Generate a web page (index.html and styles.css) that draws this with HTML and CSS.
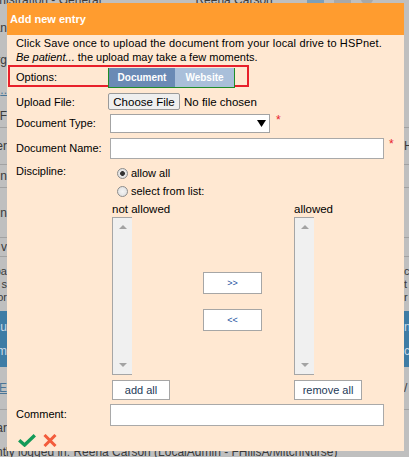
FILE: index.html
```html
<!DOCTYPE html>
<html lang="en">
<head>
  <meta charset="UTF-8">
  <meta name="viewport" content="width=device-width, initial-scale=1.0">
  <title>Add new entry</title>
  <link rel="stylesheet" href="styles.css">
</head>
<body>
  <div class="page">
    <div class="page-top">
      <span class="crumb">Administration - General</span>
      <span class="user">Reena Carson</span>
      <span class="tool tool-blue"></span>
      <span class="tool"></span>
      <span class="tool tool-round"></span>
    </div>
    <div class="bg-row" style="height: 32px"><span class="bg-left">an</span></div>
    <div class="bg-row" style="height: 31px"><span class="bg-left">rg</span></div>
    <div class="bg-row" style="height: 30px"><span class="bg-left bg-link">..</span></div>
    <div class="bg-row bg-line" style="height: 23px"><span class="bg-left">t F</span></div>
    <div class="bg-row bg-line" style="height: 37px"><span class="bg-left">er</span><span class="bg-right">H</span></div>
    <div class="bg-row bg-line" style="height: 23px"><span class="bg-left">n</span></div>
    <div class="bg-row bg-line" style="height: 50px"><span class="bg-left">un</span></div>
    <div class="bg-row bg-line" style="height: 19px"><span class="bg-left">v</span></div>
    <div class="bg-row bg-multi" style="height: 54px">
      <span class="bg-left"><span>pa</span><span>s</span><span>or</span></span>
      <span class="bg-right"><span>c</span><span>t</span><span>r</span></span>
    </div>
    <div class="bg-row bg-band" style="height: 56px">
      <span class="bg-left"><span>cu</span><span>m</span></span>
      <span class="bg-right"><span>n</span><span>c</span></span>
    </div>
    <div class="bg-row bg-line" style="height: 43px"><span class="bg-left bg-link">E</span><span class="bg-right">/</span></div>
    <div class="bg-row" style="height: 36px"><span class="bg-left">ar</span></div>
    <div class="page-foot">Currently logged in: Reena Carson (LocalAdmin - FHillsA/MitchNurse)</div>
  </div>

  <div class="dialog">
    <div class="dialog-header">Add new entry</div>
    <div class="dialog-body">
      <p class="intro"><span class="intro-first">Click Save once to upload the document from your local drive to HSPnet.</span><br><em>Be patient...</em> the upload may take a few moments.</p>

      <div class="options">
        <span class="field-label">Options:</span>
        <div class="tabs">
          <span class="tab tab-active">Document</span>
          <span class="tab">Website</span>
        </div>
      </div>

      <div class="field field-upload">
        <label class="field-label" for="upload">Upload File:</label>
        <input type="file" id="upload" class="file-input">
      </div>

      <div class="field field-type">
        <label class="field-label" for="doctype">Document Type:</label>
        <div class="select-wrap">
          <select id="doctype" class="select"><option></option></select>
          <svg class="select-arrow" width="9" height="7" viewBox="0 0 9 7"><polygon points="0,0 9,0 4.5,7" fill="#000"/></svg>
        </div>
        <span class="required">*</span>
      </div>

      <div class="field field-name">
        <label class="field-label" for="docname">Document Name:</label>
        <input type="text" id="docname" class="text-input">
        <span class="required">*</span>
      </div>

      <div class="field field-discipline">
        <span class="field-label">Discipline:</span>
        <div class="radios">
          <label class="radio-row"><input type="radio" name="discipline" class="radio" checked> allow all</label>
          <label class="radio-row"><input type="radio" name="discipline" class="radio"> select from list:</label>
        </div>
      </div>

      <div class="transfer">
        <div class="transfer-col">
          <div class="list-title">not allowed</div>
          <div class="listbox"><div class="scroll"><span class="arrow-up"></span><span class="arrow-down"></span></div></div>
          <button class="list-btn btn-add">add all</button>
        </div>
        <div class="transfer-mid">
          <button class="move-btn">&gt;&gt;</button>
          <button class="move-btn">&lt;&lt;</button>
        </div>
        <div class="transfer-col">
          <div class="list-title">allowed</div>
          <div class="listbox"><div class="scroll"><span class="arrow-up"></span><span class="arrow-down"></span></div></div>
          <button class="list-btn btn-remove">remove all</button>
        </div>
      </div>

      <div class="field field-comment">
        <label class="field-label" for="comment">Comment:</label>
        <input type="text" id="comment" class="text-input">
      </div>

      <div class="actions">
        <svg class="icon-save" width="18" height="13" viewBox="0 0 18 13"><path d="M1.2 6.2 L6.6 11 L16.8 1.3" fill="none" stroke="#149a58" stroke-width="3.4"/></svg>
        <svg class="icon-cancel" width="14" height="13" viewBox="0 0 14 13"><path d="M1.5 1 L12.5 12 M12.5 1 L1.5 12" fill="none" stroke="#f35c3c" stroke-width="3"/></svg>
      </div>
    </div>
  </div>
</body>
</html>
```

FILE: styles.css
```css
body {
  margin: 0;
  height: 457px;
  overflow: hidden;
  background-color: #bfbfbf;
  font-family: "Liberation Sans", Arial, sans-serif;
  font-size: 11px;
  color: #000;
}

/* page behind the dialog */
.page {
  color: #3a3a3a;
}
.page-top {
  display: flex;
  align-items: flex-start;
  height: 12px;
  line-height: 10px;
  font-size: 12px;
}
.crumb {
  margin-top: -5px;
  margin-left: -28px;
}
.user {
  margin-top: -5px;
  margin-left: 94px;
}
.tool {
  width: 17px;
  height: 10px;
  margin-top: -6px;
  margin-left: 10px;
  background-color: #a8a8a8;
}
.tool-blue {
  margin-left: 34px;
  background-color: #7d9fb8;
}
.tool-round {
  width: 12px;
  border-radius: 6px;
}
.bg-row {
  display: flex;
  align-items: center;
  box-sizing: border-box;
  font-size: 12px;
  line-height: 12px;
}
.bg-line {
  border-bottom: 1px solid #a2a2a2;
}
.bg-left {
  display: flex;
  justify-content: flex-end;
  width: 7px;
  white-space: nowrap;
}
.bg-right {
  margin-left: auto;
  width: 5px;
  white-space: nowrap;
}
.bg-multi .bg-left,
.bg-band .bg-left {
  flex-direction: column;
  align-items: flex-end;
}
.bg-multi .bg-right,
.bg-band .bg-right {
  display: flex;
  flex-direction: column;
}
.bg-multi {
  font-size: 11px;
  line-height: 13px;
}
.bg-link {
  color: #4a7596;
  text-decoration: underline;
}
.bg-band {
  background-color: #3e7ca5;
  color: #c9d9e6;
  line-height: 24px;
}
.page-foot {
  margin-left: -34px;
  margin-top: -1px;
  font-size: 12px;
  white-space: nowrap;
}

/* dialog */
.dialog {
  position: absolute;
  left: 7px;
  top: 3px;
  width: 397px;
  height: 448px;
  background-color: #ffe8d2;
}
.dialog-header {
  display: flex;
  align-items: center;
  height: 32px;
  padding-left: 3px;
  background-color: #ff9c2f;
  color: white;
  font-weight: bold;
  font-size: 11px;
}
.dialog-body {
  padding: 1px 9px 0 9px;
}
.intro {
  margin: 0;
  line-height: 14px;
}
.intro-first {
  letter-spacing: 0.15px;
}
.options {
  display: flex;
  align-items: center;
  box-sizing: border-box;
  width: 241px;
  height: 22px;
  margin: 1px 0 0 -8px;
  padding: 1px 0 0 6px;
  border: 2px solid #e8202b;
}
.options .field-label {
  width: 92px;
  align-self: center;
}
.tabs {
  display: flex;
  align-self: flex-start;
  height: 20px;
  margin-bottom: -3px;
  border: 1px solid #1f8d27;
  border-top: none;
  box-sizing: border-box;
}
.tab {
  display: flex;
  align-items: center;
  justify-content: center;
  width: 59px;
  background-color: #a9bfda;
  color: white;
  font-weight: bold;
  font-size: 10px;
}
.tab-active {
  width: 66px;
  background-color: #6a8ab5;
}
.field {
  display: flex;
  align-items: center;
}
.field-label {
  width: 94px;
  flex-shrink: 0;
}
.field-upload {
  margin-top: 6px;
  height: 17px;
}
.field-upload .field-label {
  width: 92px;
}
.file-input {
  font-family: inherit;
  font-size: 11.5px;
  color: #000;
}
.file-input::file-selector-button {
  height: 17px;
  width: 72px;
  margin-right: 4px;
  padding: 0;
  font-family: inherit;
  font-size: 11.5px;
  background-color: #efefef;
  border: 1px solid #9a9a9a;
  border-radius: 2px;
  color: #000;
}
.field-type {
  margin-top: 4px;
  align-items: flex-start;
}
.field-type .field-label {
  line-height: 19px;
}
.select-wrap {
  position: relative;
}
.select {
  display: block;
  appearance: none;
  width: 160px;
  height: 19px;
  margin: 0;
  border: 1px solid #a3a3a3;
  border-radius: 0;
  background-color: white;
}
.select-arrow {
  position: absolute;
  right: 4px;
  top: 6px;
}
.required {
  margin-left: 6px;
  color: #e8202b;
  font-size: 12px;
  line-height: 12px;
}
.field-name {
  margin-top: 5px;
  align-items: flex-start;
}
.field-name .field-label,
.field-comment .field-label {
  line-height: 21px;
}
.text-input {
  box-sizing: border-box;
  width: 274px;
  height: 21px;
  margin: 0;
  border: 1px solid #a9a9a9;
  background-color: white;
}
.field-name .required {
  margin-left: 5px;
}
.field-discipline {
  margin-top: 5px;
  align-items: flex-start;
}
.field-discipline .field-label {
  line-height: 14px;
}
.radios {
  display: flex;
  flex-direction: column;
  margin-left: 7px;
}
.radio-row {
  display: flex;
  align-items: center;
  height: 18px;
  gap: 3px;
  font-size: 11px;
}
.radio {
  appearance: none;
  width: 11px;
  height: 11px;
  margin: 0;
  border: 1px solid #8c8c8c;
  border-radius: 50%;
  background: radial-gradient(circle, #f4f4f4 0, #dcdcdc 100%);
}
.radio:checked {
  background: radial-gradient(circle, #333 0, #333 2px, #e6e6e6 2.8px, #dcdcdc 100%);
}
.transfer {
  display: flex;
  margin: 2px 0 0 96px;
}
.transfer-col {
  display: flex;
  flex-direction: column;
  align-items: flex-start;
  width: 91px;
}
.list-title {
  height: 14px;
  line-height: 14px;
  font-size: 11.5px;
}
.listbox {
  box-sizing: border-box;
  width: 20px;
  height: 158px;
  margin-top: 1px;
  border: 1px solid #a6a6a6;
  border-right: none;
  background-color: white;
}
.scroll {
  display: flex;
  flex-direction: column;
  justify-content: space-between;
  align-items: center;
  height: 100%;
  padding: 7px 0;
  box-sizing: border-box;
  background-color: #f0f0f0;
}
.arrow-up,
.arrow-down {
  width: 0;
  height: 0;
  border-left: 4px solid transparent;
  border-right: 4px solid transparent;
}
.arrow-up {
  border-bottom: 4px solid #a3a3a3;
}
.arrow-down {
  border-top: 4px solid #a3a3a3;
}
.list-btn,
.move-btn {
  box-sizing: border-box;
  margin: 0;
  padding: 0;
  background-color: white;
  border: 1px solid #a6a6a6;
  font-family: inherit;
  cursor: pointer;
}
.list-btn {
  height: 20px;
  margin-top: 5px;
  font-size: 11px;
  color: #1d3a58;
}
.btn-add {
  width: 58px;
}
.btn-remove {
  width: 68px;
}
.transfer-mid {
  display: flex;
  flex-direction: column;
  gap: 15px;
  width: 59px;
  margin-right: 32px;
  padding-top: 70px;
}
.move-btn {
  width: 59px;
  height: 22px;
  font-size: 9px;
  color: #1b52a0;
}
.field-comment {
  margin-top: 4px;
  align-items: flex-start;
}
.field-comment .text-input {
  height: 22px;
}
.actions {
  display: flex;
  gap: 7px;
  margin-top: 8px;
  padding-left: 2px;
}
```
